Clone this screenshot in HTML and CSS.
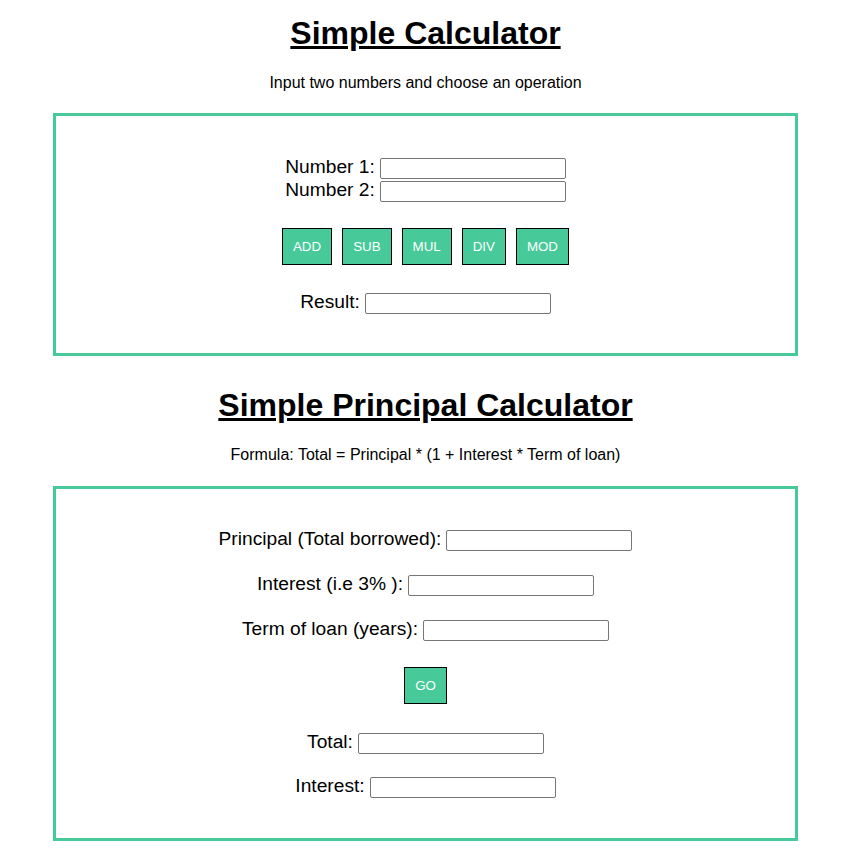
FILE: index.html
```html
<!DOCTYPE html>
<html lang="en">
<head>
<meta charset="utf-8">
<title>Simple Calculator</title>
<link rel="stylesheet" href="styles.css">
</head>
<body>
<div class="page">
  <section class="section">
    <h1 class="title">Simple Calculator</h1>
    <p class="subtitle">Input two numbers and choose an operation</p>
    <div class="box box-calc">
      <div class="pair">
        <div class="row"><label class="label" for="n1">Number 1:</label><input class="field" id="n1" type="text"></div>
        <div class="row"><label class="label" for="n2">Number 2:</label><input class="field" id="n2" type="text"></div>
      </div>
      <div class="buttons">
        <button class="btn">ADD</button>
        <button class="btn">SUB</button>
        <button class="btn">MUL</button>
        <button class="btn">DIV</button>
        <button class="btn">MOD</button>
      </div>
      <div class="row row-result"><label class="label" for="res">Result:</label><input class="field" id="res" type="text"></div>
    </div>
  </section>
  <section class="section">
    <h1 class="title">Simple Principal Calculator</h1>
    <p class="subtitle">Formula: Total = Principal * (1 + Interest * Term of loan)</p>
    <div class="box box-principal">
      <div class="row r-principal"><label class="label" for="p">Principal (Total borrowed):</label><input class="field" id="p" type="text"></div>
      <div class="row r-interest"><label class="label" for="i">Interest (i.e 3% ):</label><input class="field" id="i" type="text"></div>
      <div class="row r-term"><label class="label" for="t">Term of loan (years):</label><input class="field" id="t" type="text"></div>
      <div class="buttons b-go"><button class="btn">GO</button></div>
      <div class="row r-total"><label class="label" for="tot">Total:</label><input class="field" id="tot" type="text"></div>
      <div class="row r-int2"><label class="label" for="int">Interest:</label><input class="field" id="int" type="text"></div>
    </div>
  </section>
</div>
</body>
</html>
```
FILE: styles.css
```css
html, body {
  margin: 0;
  padding: 0;
  background: #ffffff;
}
body {
  font-family: "Liberation Sans", Arial, sans-serif;
  color: #000;
}
.page {
  width: 851px;
  display: flex;
  flex-direction: column;
}
.section {
  display: flex;
  flex-direction: column;
}
.section + .section {
  margin-top: 16px;
}
.title {
  margin: 15px 0 22px;
  font-size: 32px;
  line-height: 37px;
  font-weight: bold;
  text-align: center;
  text-decoration: underline;
}
.subtitle {
  margin: 0 0 21px;
  font-size: 16px;
  line-height: 18px;
  text-align: center;
}
.box {
  margin: 0 53px;
  border: 3px solid #47c99a;
  display: flex;
  flex-direction: column;
  align-items: center;
}
.box-calc {
  padding: 41px 0 38px;
}
.box-principal {
  margin-top: 1px;
  padding: 40px 0 39px;
}
.pair {
  display: flex;
  flex-direction: column;
  align-items: center;
}
.row {
  height: 23px;
  display: flex;
  align-items: center;
  justify-content: center;
  gap: 5px;
}
.label {
  font-size: 19.2px;
  line-height: 22px;
  padding-bottom: 3px;
}
.field {
  box-sizing: border-box;
  width: 186px;
  height: 21px;
  margin: 0;
  padding: 1px 2px;
  border: 1px solid #767676;
  border-radius: 2px;
  background: #fff;
  font-family: "Liberation Sans", Arial, sans-serif;
  font-size: 13.33px;
}
.buttons {
  display: flex;
  justify-content: center;
  gap: 10px;
  margin-top: 25px;
}
.btn {
  margin: 0;
  padding: 10px;
  height: 37px;
  border: 1px solid #000;
  border-radius: 0;
  background: #47c99a;
  color: #fff;
  font-family: "Liberation Sans", Arial, sans-serif;
  font-size: 13.33px;
  line-height: 15px;
}
.row-result {
  margin-top: 27px;
}
.r-interest,
.r-term {
  margin-top: 22px;
}
.r-total {
  margin-top: 28px;
}
.r-int2 {
  margin-top: 21px;
}
```
